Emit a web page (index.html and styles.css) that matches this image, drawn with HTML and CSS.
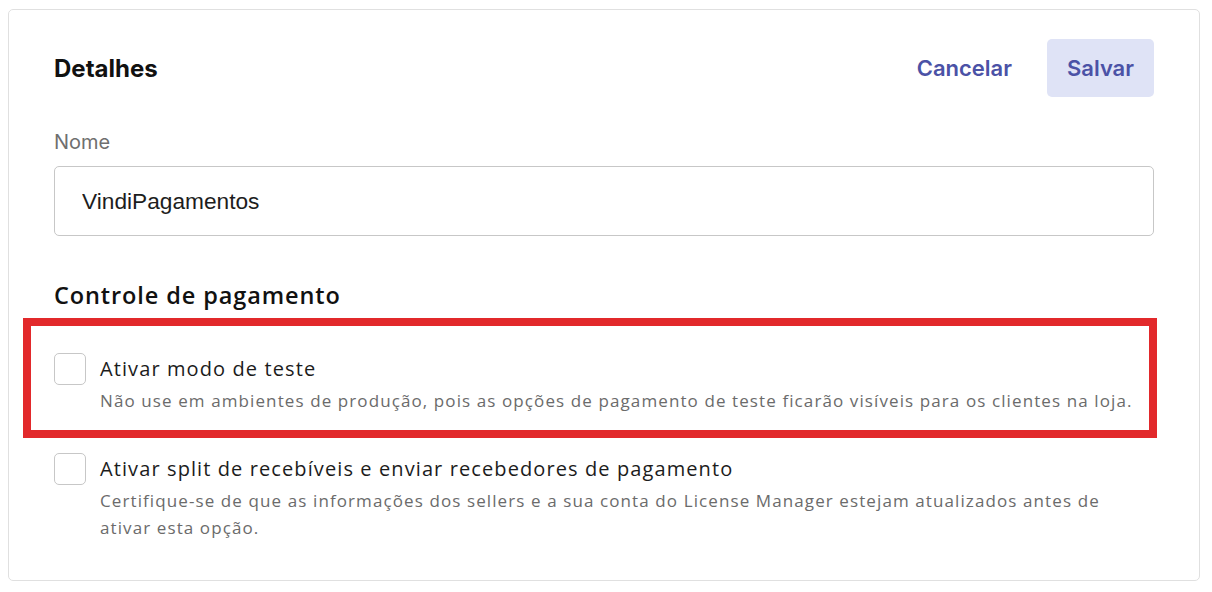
FILE: index.html
```html
<!DOCTYPE html>
<html lang="pt-BR">
<head>
    <meta charset="UTF-8">
    <meta name="viewport" content="width=device-width, initial-scale=1.0">
    <title>Detalhes</title>
    <link rel="stylesheet" href="styles.css">
</head>
<body>
    <div class="card">
        <div class="card-header">
            <h1>Detalhes</h1>
            <div class="actions">
                <button class="btn-text">Cancelar</button>
                <button class="btn-save">Salvar</button>
            </div>
        </div>

        <label class="field-label" for="nome">Nome</label>
        <input class="text-input" id="nome" type="text" value="VindiPagamentos">

        <h2>Controle de pagamento</h2>

        <div class="highlight">
            <div class="option">
                <span class="checkbox"></span>
                <div class="option-text">
                    <div class="option-label">Ativar modo de teste</div>
                    <div class="option-desc">Não use em ambientes de produção, pois as opções de pagamento de teste ficarão visíveis para os clientes na loja.</div>
                </div>
            </div>
        </div>

        <div class="option option-split">
            <span class="checkbox"></span>
            <div class="option-text">
                <div class="option-label">Ativar split de recebíveis e enviar recebedores de pagamento</div>
                <div class="option-desc">Certifique-se de que as informações dos sellers e a sua conta do License Manager estejam atualizados antes de ativar esta opção.</div>
            </div>
        </div>
    </div>
</body>
</html>
```

FILE: styles.css
```css
body {
    margin: 0;
    background-color: #ffffff;
    font-family: Inter, "Liberation Sans", sans-serif;
}

.card {
    margin: 9px 12px 0 8px;
    border: 1px solid #e0e0e0;
    border-radius: 5px;
    padding: 29px 45px 38px 45px;
    height: 503px;
    box-sizing: content-box;
}

.card-header {
    display: flex;
    align-items: center;
    justify-content: space-between;
    height: 58px;
}

h1 {
    margin: 0;
    font-size: 24px;
    font-weight: 700;
    color: #111111;
}

.actions {
    display: flex;
    align-items: center;
    gap: 14px;
}

.btn-text,
.btn-save {
    font-family: Inter, "Liberation Sans", sans-serif;
    font-size: 22px;
    font-weight: 600;
    color: #4b52a6;
    border: none;
    border-radius: 5px;
    cursor: pointer;
    height: 58px;
}

.btn-text {
    background: none;
    padding: 0 21px 0 20px;
}

.btn-save {
    background-color: #dfe3f6;
    padding: 0;
    width: 107px;
}

.field-label {
    display: block;
    margin-top: 33px;
    font-size: 20px;
    line-height: 24px;
    color: #6f6f6f;
}

.text-input {
    display: block;
    margin-top: 12px;
    width: 100%;
    height: 70px;
    box-sizing: border-box;
    border: 1px solid #c7c7c7;
    border-radius: 5px;
    padding: 0 27px;
    font-family: "Liberation Sans", Arial, sans-serif;
    font-size: 22.7px;
    color: #1d1d1d;
}

h2 {
    margin: 44px 0 0 0;
    font-family: "Open Sans", sans-serif;
    font-size: 23.5px;
    font-weight: 600;
    line-height: 30px;
    color: #111111;
    letter-spacing: 0.9px;
}

.highlight {
    margin: 8px -3px 0 -31px;
    border: 8px solid #e2292b;
    padding: 27px 0 16px 23px;
}

.option {
    display: flex;
    gap: 14px;
}

.option-split {
    margin-top: 15px;
}

.checkbox {
    flex: none;
    width: 32px;
    height: 32px;
    box-sizing: border-box;
    border: 1px solid #c7c7c7;
    border-radius: 5px;
    background-color: #ffffff;
}

.option-label {
    font-family: "Open Sans", sans-serif;
    font-size: 20px;
    line-height: 32px;
    color: #1c1c1c;
    letter-spacing: 1.1px;
}

.option-desc {
    margin-top: 2px;
    font-family: "Open Sans", sans-serif;
    font-size: 17px;
    line-height: 27px;
    color: #6b6b6b;
    letter-spacing: 1.1px;
}
```
